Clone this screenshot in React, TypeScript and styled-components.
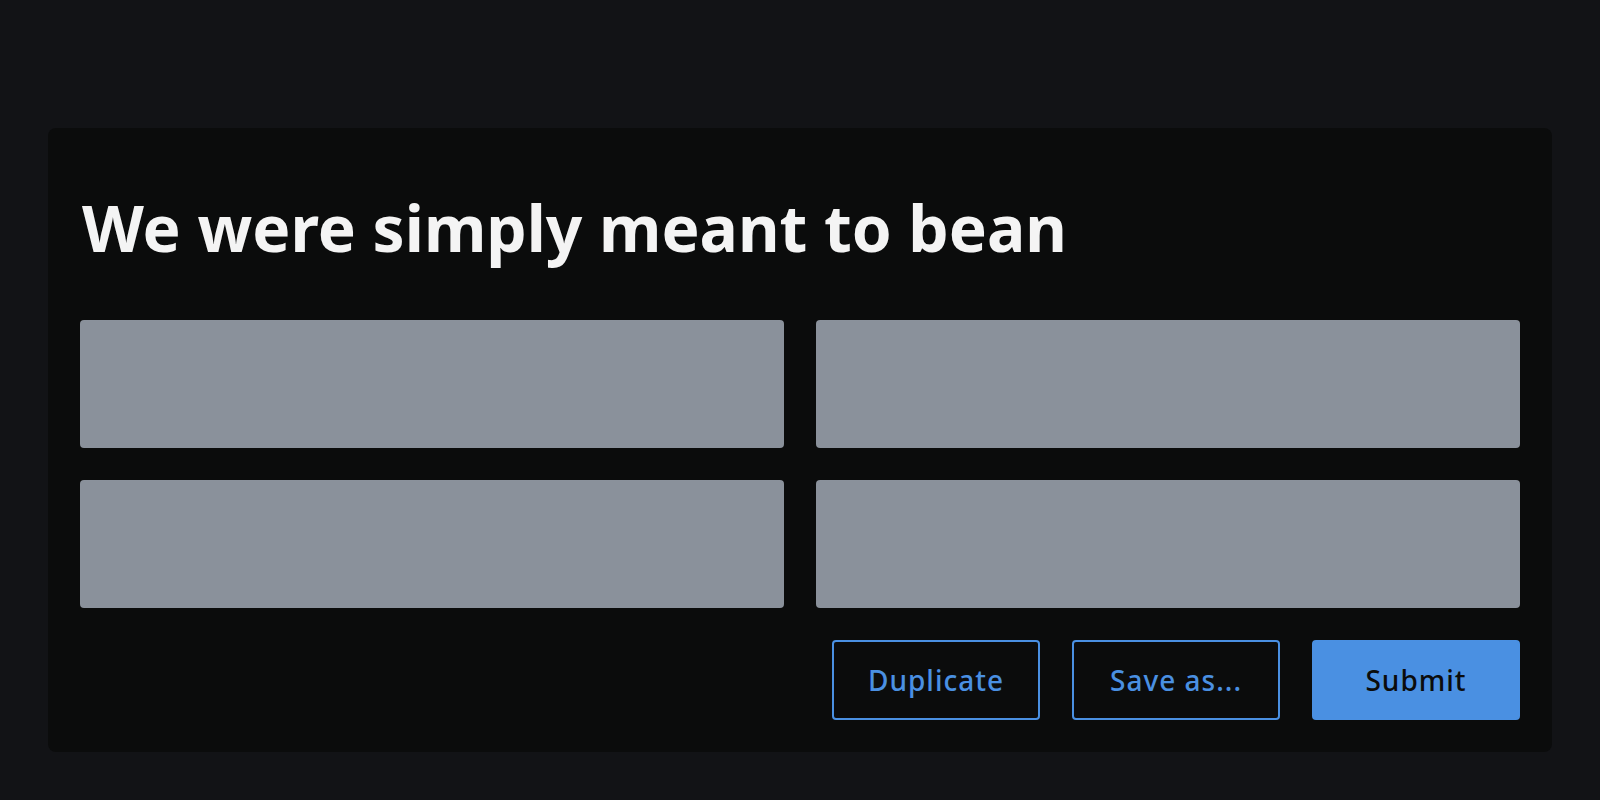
import React from "react";
import styled, { createGlobalStyle } from "styled-components";

const GlobalStyle = createGlobalStyle`
  html, body {
    margin: 0;
    padding: 0;
    background: #121316;
  }
  * {
    box-sizing: border-box;
  }
`;

const Page = styled.div`
  min-height: 800px;
  padding: 128px 48px 48px;
  background: #121316;
`;

const Card = styled.form`
  background: #0b0c0c;
  border-radius: 8px;
  padding: 32px;
  display: flex;
  flex-direction: column;
`;

const Title = styled.h1`
  margin: 36px 0 60px;
  font-family: "Noto Sans", "Open Sans", sans-serif;
  font-weight: 700;
  font-size: 64px;
  line-height: 64px;
  color: #f4f4f4;
  padding-left: 2px;
`;

const FieldGrid = styled.div`
  display: grid;
  grid-template-columns: 1fr 1fr;
  grid-auto-rows: 128px;
  gap: 32px;
`;

const Field = styled.input`
  border: none;
  border-radius: 4px;
  background: #8a919b;
  width: 100%;
  height: 100%;
  outline: none;
`;

const Actions = styled.div`
  display: flex;
  justify-content: flex-end;
  gap: 32px;
  margin-top: 32px;
`;

const Button = styled.button<{ $primary?: boolean }>`
  width: 208px;
  height: 80px;
  border-radius: 4px;
  border: 2px solid #4a90e2;
  background: ${(p) => (p.$primary ? "#4a90e2" : "transparent")};
  color: ${(p) => (p.$primary ? "#0b0c0c" : "#4a90e2")};
  font-family: "Noto Sans", "Open Sans", sans-serif;
  font-size: 28px;
  font-weight: 500;
  letter-spacing: 1px;
  cursor: pointer;
`;

export default function App() {
  return (
    <>
      <GlobalStyle />
      <Page>
        <Card onSubmit={(e) => e.preventDefault()}>
          <Title>We were simply meant to bean</Title>
          <FieldGrid>
            <Field />
            <Field />
            <Field />
            <Field />
          </FieldGrid>
          <Actions>
            <Button type="button">Duplicate</Button>
            <Button type="button">Save as...</Button>
            <Button type="submit" $primary>
              Submit
            </Button>
          </Actions>
        </Card>
      </Page>
    </>
  );
}
